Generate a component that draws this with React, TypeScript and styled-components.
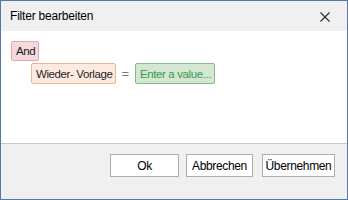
import styled, { createGlobalStyle } from "styled-components";

const GlobalStyle = createGlobalStyle`
  html, body {
    margin: 0;
    padding: 0;
    background: #ffffff;
  }
  body {
    font-family: "Liberation Sans", Arial, sans-serif;
    font-size: 11px;
  }
`;

type ChipKind = "group" | "field" | "value";

const chipColors: Record<ChipKind, { bg: string; border: string; color: string }> = {
  group: { bg: "#f5d9dc", border: "#e3a9b0", color: "#1a1a1a" },
  field: { bg: "#fdeadf", border: "#f4b48b", color: "#1f1f1f" },
  value: { bg: "#d4e7d3", border: "#86b98b", color: "#3a9a4c" },
};

function App() {
  return (
    <>
      <GlobalStyle />
      <Window>
        <TitleBar>
          <Title>Filter bearbeiten</Title>
          <CloseButton aria-label="close">
            <svg width="10" height="10" viewBox="0 0 10 10">
              <path d="M0.5 0.5 L9.5 9.5 M9.5 0.5 L0.5 9.5" stroke="#2b2b2b" strokeWidth="1.1" fill="none" />
            </svg>
          </CloseButton>
        </TitleBar>
        <Content>
          <Row>
            <Chip kind="group">And</Chip>
          </Row>
          <Row indent>
            <Chip kind="field">Wieder- Vorlage</Chip>
            <Operator>=</Operator>
            <Chip kind="value">Enter a value...</Chip>
          </Row>
        </Content>
        <Footer>
          <Button style={{ width: 69 }}>Ok</Button>
          <Button style={{ width: 67 }}>Abbrechen</Button>
          <Button style={{ width: 73, marginLeft: 2 }}>Übernehmen</Button>
        </Footer>
      </Window>
    </>
  );
}

export default App;

const Window = styled.div`
  box-sizing: border-box;
  width: 348px;
  height: 200px;
  border: 1px solid #5677ae;
  display: flex;
  flex-direction: column;
  background: #ffffff;
`;

const TitleBar = styled.div`
  height: 30px;
  flex-shrink: 0;
  background: #f0f0f0;
  display: flex;
  align-items: center;
  justify-content: space-between;
  padding: 0 17px 0 9px;
`;

const Title = styled.span`
  font-size: 12px;
  letter-spacing: -0.2px;
  color: #000000;
  padding-bottom: 1px;
`;

const CloseButton = styled.div`
  width: 10px;
  height: 10px;
  display: flex;
  margin-top: 1px;
`;

const Content = styled.div`
  flex: 1;
  background: #ffffff;
  padding: 10px 10px;
  display: flex;
  flex-direction: column;
  gap: 2px;
`;

const Row = styled.div<{ indent?: boolean }>`
  display: flex;
  align-items: center;
  padding-left: ${(p) => (p.indent ? "20px" : "0")};
`;

const Chip = styled.div<{ kind: ChipKind }>`
  box-sizing: border-box;
  height: ${(p) => (p.kind === "group" ? "20px" : "21px")};
  padding: 0 3px 0 4px;
  display: flex;
  align-items: center;
  border-radius: 2px;
  font-size: 11.5px;
  letter-spacing: -0.4px;
  background: ${(p) => chipColors[p.kind].bg};
  border: 1px solid ${(p) => chipColors[p.kind].border};
  color: ${(p) => chipColors[p.kind].color};
`;

const Operator = styled.span`
  color: #7a7a7a;
  font-size: 13px;
  padding: 0 6px 0 5px;
`;

const Footer = styled.div`
  height: 45px;
  flex-shrink: 0;
  background: #f0f0f0;
  border-top: 1px solid #c9c9c9;
  display: flex;
  justify-content: flex-end;
  align-items: flex-start;
  padding: 10px 12px 0 0;
  gap: 7px;
`;

const Button = styled.div`
  box-sizing: border-box;
  height: 23px;
  background: #ffffff;
  border: 1px solid #adadad;
  display: flex;
  align-items: center;
  justify-content: center;
  font-size: 12px;
  letter-spacing: -0.35px;
  color: #000000;
`;
